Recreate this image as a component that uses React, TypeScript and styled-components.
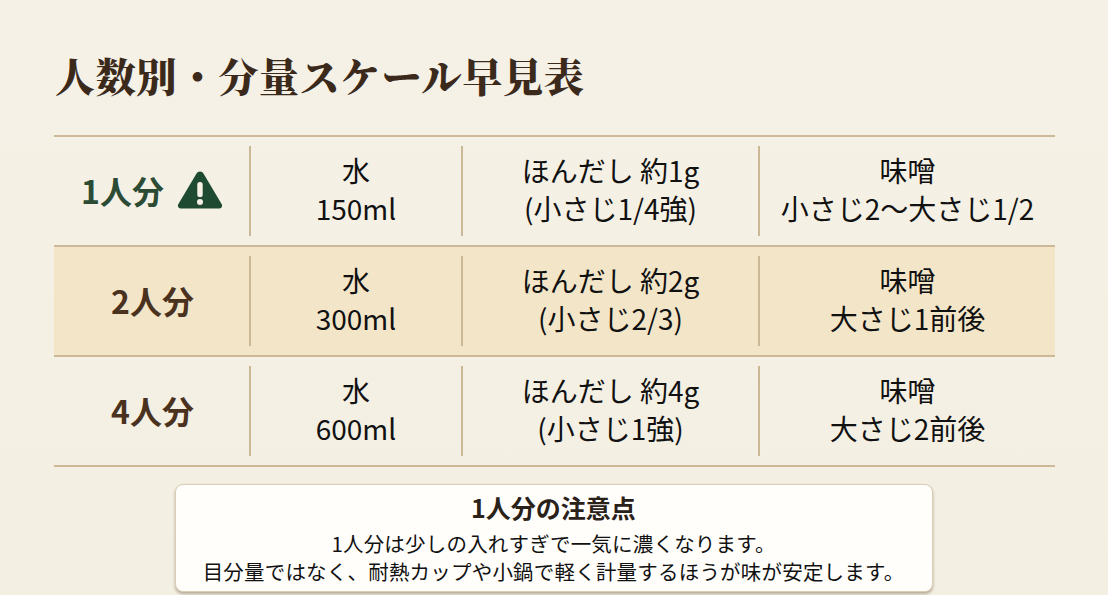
import React from "react";
import styled, { createGlobalStyle } from "styled-components";

const Global = createGlobalStyle`
  html, body { margin: 0; padding: 0; background: #f4f0e4; }
  body { font-family: "Noto Sans CJK JP", "Noto Sans", sans-serif; }
`;

const Page = styled.div`
  width: 1108px;
  height: 595px;
  box-sizing: border-box;
  padding: 47px 53px 0 54px;
  background: linear-gradient(180deg, #f5f1e6 0%, #f3efe2 100%);
  overflow: hidden;
`;

const Title = styled.h1`
  margin: 0;
  font-family: "Noto Serif CJK JP", "Noto Sans CJK JP", serif;
  font-weight: 900;
  font-size: 40px;
  line-height: 56px;
  color: #3b2a1b;
  letter-spacing: 0.8px;
  padding-left: 1px;
`;

const Table = styled.div`
  margin-top: 32px;
  width: 1001px;
  border-top: 2px solid #cdb998;
`;

const Row = styled.div<{ $shaded?: boolean }>`
  display: grid;
  grid-template-columns: 195px 212px 297px 297px;
  height: 108px;
  border-bottom: 2px solid #cdb998;
  background: ${(p) => (p.$shaded ? "#f3e6c8" : "transparent")};
`;

const LabelCell = styled.div<{ $green?: boolean }>`
  display: flex;
  align-items: center;
  justify-content: center;
  gap: 12px;
  font-weight: 700;
  font-size: 32px;
  color: ${(p) => (p.$green ? "#2c4b35" : "#4a321f")};
  padding-left: 2px;
  padding-bottom: 3px;
`;

const Cell = styled.div`
  margin: 9px 0;
  border-left: 2px solid #cbb897;
  display: flex;
  flex-direction: column;
  align-items: center;
  justify-content: center;
  font-size: 28px;
  font-weight: 400;
  line-height: 38px;
  color: #111111;
  text-align: center;
  padding-bottom: 4px;
`;

const Note = styled.div`
  margin: 17px auto 0;
  width: 758px;
  box-sizing: border-box;
  padding: 4px 0 6px;
  background: #fffefb;
  border: 1px solid #d9cdb6;
  border-radius: 8px;
  box-shadow: 0 2px 3px rgba(70, 50, 20, 0.35);
  text-align: center;
  color: #111111;
  position: relative;
  left: -1px;
`;

const NoteTitle = styled.div`
  font-weight: 700;
  font-size: 25px;
  line-height: 36px;
  margin-bottom: 4px;
  color: #2a2119;
`;

const NoteLine = styled.div`
  font-size: 20.5px;
  font-weight: 400;
  line-height: 28px;
  letter-spacing: 0.2px;
`;

const Warn = () => (
  <svg width="48" height="41" viewBox="0 0 48 41">
    <path
      d="M24 2.5 C25.6 2.5 26.7 3.3 27.6 4.8 L45.6 35 C46.9 37.3 45.5 39.5 43 39.5 L5 39.5 C2.5 39.5 1.1 37.3 2.4 35 L20.4 4.8 C21.3 3.3 22.4 2.5 24 2.5 Z"
      fill="#1f4a32"
    />
    <rect x="21.3" y="13" width="5.4" height="15" rx="2.6" fill="#f6f1e4" />
    <circle cx="24" cy="33" r="3" fill="#f6f1e4" />
  </svg>
);

const rows = [
  {
    label: "1人分",
    green: true,
    warn: true,
    water: "150ml",
    dashi: ["ほんだし 約1g", "(小さじ1/4強)"],
    miso: "小さじ2〜大さじ1/2",
  },
  {
    label: "2人分",
    shaded: true,
    water: "300ml",
    dashi: ["ほんだし 約2g", "(小さじ2/3)"],
    miso: "大さじ1前後",
  },
  {
    label: "4人分",
    water: "600ml",
    dashi: ["ほんだし 約4g", "(小さじ1強)"],
    miso: "大さじ2前後",
  },
];

export default function App() {
  return (
    <>
      <Global />
      <Page>
        <Title>人数別・分量スケール早見表</Title>
        <Table>
          {rows.map((r) => (
            <Row key={r.label} $shaded={r.shaded}>
              <LabelCell $green={r.green}>
                <span>{r.label}</span>
                {r.warn && <Warn />}
              </LabelCell>
              <Cell>
                <div>水</div>
                <div>{r.water}</div>
              </Cell>
              <Cell>
                <div>{r.dashi[0]}</div>
                <div>{r.dashi[1]}</div>
              </Cell>
              <Cell>
                <div>味噌</div>
                <div>{r.miso}</div>
              </Cell>
            </Row>
          ))}
        </Table>
        <Note>
          <NoteTitle>1人分の注意点</NoteTitle>
          <NoteLine>1人分は少しの入れすぎで一気に濃くなります。</NoteLine>
          <NoteLine>目分量ではなく、耐熱カップや小鍋で軽く計量するほうが味が安定します。</NoteLine>
        </Note>
      </Page>
    </>
  );
}
